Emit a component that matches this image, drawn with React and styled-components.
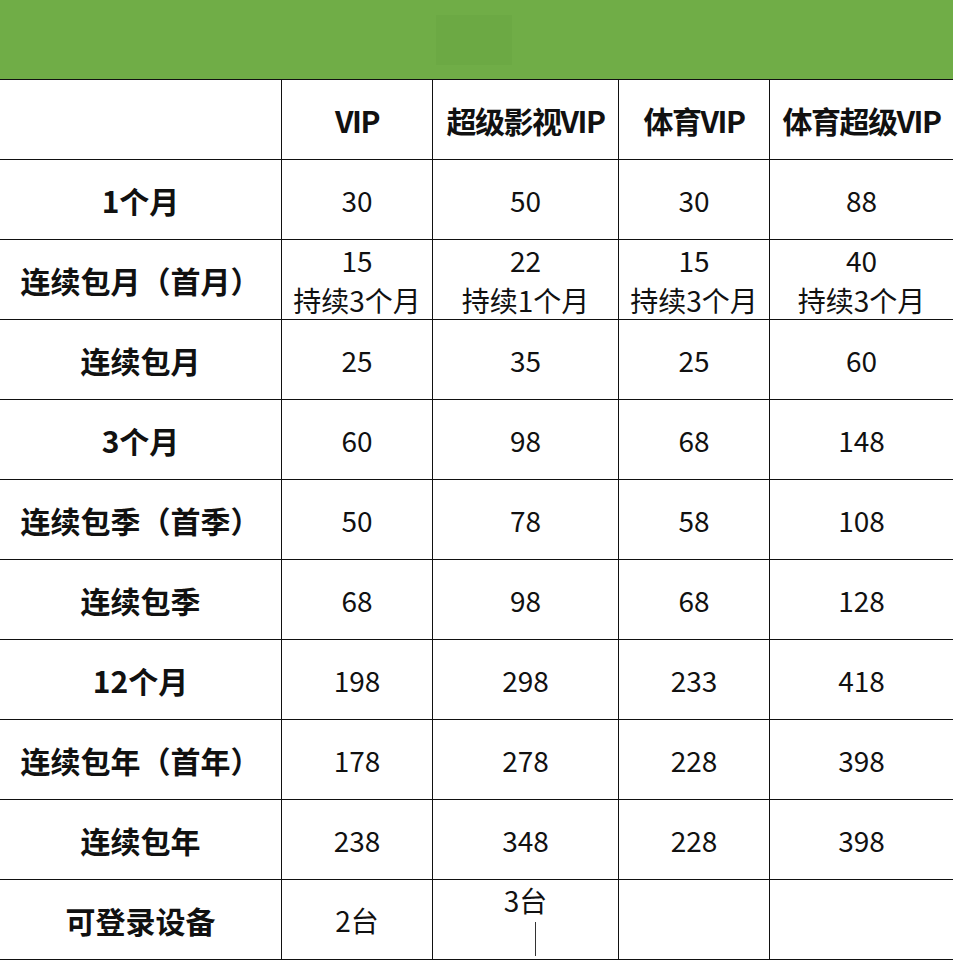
import styled, { createGlobalStyle } from 'styled-components';

const Global = createGlobalStyle`
  * { box-sizing: border-box; }
  body {
    margin: 0;
    background: #fff;
    font-family: "Noto Sans CJK SC", "Noto Sans", sans-serif;
    color: #111;
  }
`

const Banner = styled.div`
  height: 80px;
  background: #70ad47;
  border-bottom: 1px solid #111;
  display: flex;
  justify-content: center;
  align-items: center;
`
const Ghost = styled.div`
  width: 76px;
  height: 50px;
  margin-left: -5px;
  background: #6ca944;
`
const Table = styled.div`
  display: grid;
  grid-template-columns: 281px 151px 186px 151px 184px;
  grid-auto-rows: 80px;
`
const Cell = styled.div`
  position: relative;
  display: flex;
  flex-direction: column;
  justify-content: ${p => (p.$top ? 'flex-start' : 'center')};
  align-items: center;
  border-bottom: 1px solid #111;
  border-left: ${p => (p.$first ? 'none' : '1px solid #111')};
  font-size: ${p => (p.$head ? '30px' : p.$bold ? '30px' : '28px')};
  font-weight: ${p => (p.$bold ? 700 : 400)};
  line-height: 40px;
  letter-spacing: ${p => (p.$head ? '-1.5px' : '0')};
  white-space: nowrap;
  padding-top: ${p => (p.$top ? '0' : '0')};
`
const Scratch = styled.span`
  position: absolute;
  left: 102px;
  top: 42px;
  width: 1px;
  height: 34px;
  background: #333;
`

const heads = ['VIP', '超级影视VIP', '体育VIP', '体育超级VIP'];

const rows = [
  ['1个月', '30', '50', '30', '88'],
  ['连续包月（首月）', ['15', '持续3个月'], ['22', '持续1个月'], ['15', '持续3个月'], ['40', '持续3个月']],
  ['连续包月', '25', '35', '25', '60'],
  ['3个月', '60', '98', '68', '148'],
  ['连续包季（首季）', '50', '78', '58', '108'],
  ['连续包季', '68', '98', '68', '128'],
  ['12个月', '198', '298', '233', '418'],
  ['连续包年（首年）', '178', '278', '228', '398'],
  ['连续包年', '238', '348', '228', '398'],
];

function App() {
  return (
    <>
      <Global />
      <Banner><Ghost /></Banner>
      <Table>
        <Cell $first />
        {heads.map(h => <Cell key={h} $bold $head>{h}</Cell>)}

        {rows.map(r => (
          <>
            <Cell key={r[0]} $first $bold>{r[0]}</Cell>
            {r.slice(1).map((v, i) => (
              <Cell key={r[0] + i}>
                {Array.isArray(v) ? v.map(t => <span key={t}>{t}</span>) : v}
              </Cell>
            ))}
          </>
        ))}

        <Cell $first $bold>可登录设备</Cell>
        <Cell>2台</Cell>
        <Cell $top>3台<Scratch /></Cell>
        <Cell />
        <Cell />
      </Table>
    </>
  );
}

export default App;
